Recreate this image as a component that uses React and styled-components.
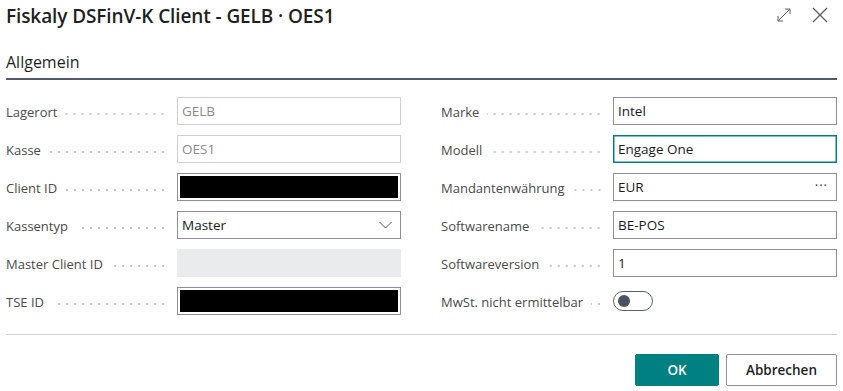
import React from 'react'
import styled, { createGlobalStyle } from 'styled-components'

const GlobalStyle = createGlobalStyle`
  html, body {
    margin: 0;
    padding: 0;
    background: #fff;
  }
  body {
    font-family: "Segoe UI", "Open Sans", "Noto Sans", sans-serif;
    color: #212121;
  }
`

const Dialog = styled.div`
  width: 843px;
  height: 391px;
  box-sizing: border-box;
  padding: 0 6px;
  display: flex;
  flex-direction: column;
`
const Header = styled.div`
  height: 32px;
  display: flex;
  align-items: center;
  justify-content: space-between;
`
const Title = styled.h1`
  margin: 0;
  font-size: 19px;
  font-weight: 600;
  letter-spacing: -0.1px;
  color: #1f1f1f;
`
const HeaderActions = styled.div`
  display: flex;
  align-items: center;
  gap: 20px;
  padding-right: 9px;
  margin-top: -2px;
`
const IconButton = styled.button`
  border: 0;
  background: none;
  padding: 0;
  width: 16px;
  height: 16px;
  display: flex;
  align-items: center;
  justify-content: center;
  color: #5c5c5c;
  cursor: pointer;
`
const SectionTitle = styled.h2`
  margin: 19px 0 0;
  padding-bottom: 5px;
  font-size: 16px;
  font-weight: 500;
  color: #1f1f1f;
  border-bottom: 2px solid #505a6b;
`
const FieldGrid = styled.div`
  display: grid;
  grid-template-columns: 395px 396px;
  column-gap: 40px;
  margin-top: 17px;
`
const Column = styled.div`
  display: flex;
  flex-direction: column;
  gap: 10px;
`
const Row = styled.div`
  display: flex;
  align-items: center;
  height: 28px;
`
const Label = styled.div`
  flex: 1;
  display: flex;
  align-items: center;
  min-width: 0;
  margin-right: 10px;
  padding-top: 2px;
  font-size: 13px;
  color: #4a4a4a;
  white-space: nowrap;
`
const Leader = styled.span`
  flex: 1;
  height: 2px;
  margin-left: 8px;
  margin-top: 3px;
  background-image: radial-gradient(circle, #c8c8c8 0.8px, transparent 1.1px);
  background-size: 8px 2px;
  background-repeat: repeat-x;
  background-position: right center;
`
const Input = styled.div`
  width: 224px;
  height: 28px;
  box-sizing: border-box;
  display: flex;
  align-items: center;
  justify-content: space-between;
  padding: ${p => (p.$masked ? '2px' : '0 8px 0 4px')};
  font-size: 13.5px;
  background: ${p => (p.$empty ? '#eaebed' : '#fff')};
  color: ${p => (p.$disabled ? '#8a8a8a' : '#1a1a1a')};
  border: 1px solid
    ${p =>
      p.$empty ? '#eaebed' : p.$focused ? '#00807f' : p.$disabled ? '#cfcfcf' : '#8d8f94'};
  box-shadow: ${p => (p.$focused ? 'inset 0 0 0 0.5px #00807f' : 'none')};
`
const Masked = styled.div`
  flex: 1;
  align-self: stretch;
  background: #000;
`
const Dots = styled.span`
  font-size: 13px;
  letter-spacing: 1px;
  color: #333;
  margin-top: -4px;
`
const ToggleSlot = styled.div`
  width: 224px;
  height: 28px;
  display: flex;
  align-items: center;
`
const Toggle = styled.div`
  width: 40px;
  height: 20px;
  box-sizing: border-box;
  border: 1px solid #5a5f6b;
  border-radius: 10px;
  display: flex;
  align-items: center;
  padding-left: 4px;
`
const Knob = styled.span`
  width: 12px;
  height: 12px;
  border-radius: 50%;
  background: #4b5263;
`
const Divider = styled.div`
  margin-top: 19px;
  border-top: 1px solid #d2d2d2;
`
const Footer = styled.div`
  display: flex;
  justify-content: flex-end;
  gap: 7px;
  margin-top: 19px;
`
const Button = styled.button`
  height: 32px;
  box-sizing: border-box;
  padding: 0;
  width: ${p => (p.$primary ? '84px' : '111px')};
  font-family: inherit;
  font-size: 13.5px;
  font-weight: 600;
  border-radius: 2px;
  border: 1px solid ${p => (p.$primary ? '#008080' : '#8d8f94')};
  background: ${p => (p.$primary ? '#008080' : '#fff')};
  color: ${p => (p.$primary ? '#fff' : '#1f1f1f')};
  cursor: pointer;
`

const ExpandIcon = () => (
  <svg width="16" height="16" viewBox="0 0 16 16" fill="none" stroke="currentColor" strokeWidth="1">
    <path d="M2 14 L14 2 M9 2 H14 V7 M2 9 V14 H7" />
  </svg>
)
const CloseIcon = () => (
  <svg width="16" height="16" viewBox="0 0 16 16" fill="none" stroke="currentColor" strokeWidth="1.3">
    <path d="M1 1 L15 15 M15 1 L1 15" />
  </svg>
)
const Chevron = () => (
  <svg width="13" height="8" viewBox="0 0 13 8" fill="none" stroke="#555" strokeWidth="1">
    <path d="M0.5 1 L6.5 7 L12.5 1" />
  </svg>
)

const Field = ({ label, children }) => (
  <Row>
    <Label>
      {label}
      <Leader />
    </Label>
    {children}
  </Row>
)

export default function App() {
  return (
    <Dialog>
      <GlobalStyle />
      <Header>
        <Title>Fiskaly DSFinV-K Client - GELB · OES1</Title>
        <HeaderActions>
          <IconButton aria-label="Erweitern"><ExpandIcon /></IconButton>
          <IconButton aria-label="Schließen"><CloseIcon /></IconButton>
        </HeaderActions>
      </Header>
      <SectionTitle>Allgemein</SectionTitle>
      <FieldGrid>
        <Column>
          <Field label="Lagerort"><Input $disabled>GELB</Input></Field>
          <Field label="Kasse"><Input $disabled>OES1</Input></Field>
          <Field label="Client ID"><Input $masked><Masked /></Input></Field>
          <Field label="Kassentyp"><Input>Master<Chevron /></Input></Field>
          <Field label="Master Client ID"><Input $empty /></Field>
          <Field label="TSE ID"><Input $masked><Masked /></Input></Field>
        </Column>
        <Column>
          <Field label="Marke"><Input>Intel</Input></Field>
          <Field label="Modell"><Input $focused>Engage One</Input></Field>
          <Field label="Mandantenwährung"><Input>EUR<Dots>···</Dots></Input></Field>
          <Field label="Softwarename"><Input>BE-POS</Input></Field>
          <Field label="Softwareversion"><Input>1</Input></Field>
          <Field label="MwSt. nicht ermittelbar">
            <ToggleSlot>
              <Toggle><Knob /></Toggle>
            </ToggleSlot>
          </Field>
        </Column>
      </FieldGrid>
      <Divider />
      <Footer>
        <Button $primary>OK</Button>
        <Button>Abbrechen</Button>
      </Footer>
    </Dialog>
  )
}
